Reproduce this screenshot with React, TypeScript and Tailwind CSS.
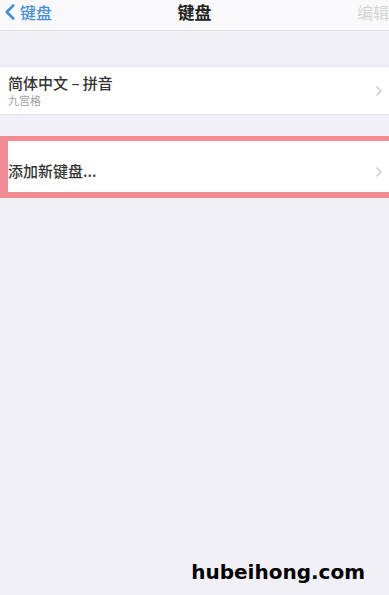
import { ChevronLeft, ChevronRight } from "lucide-react"

const font = { fontFamily: '"Noto Sans CJK SC", "Noto Sans", sans-serif' }

export default function App() {
    return (
        <div className="w-[389px] h-[595px] bg-[#f1f0f6] flex flex-col overflow-hidden" style={font}>
            <div className="h-[31px] bg-[#f9f9fb] border-b border-[#e2e2e6] flex items-start relative pt-[1px]">
                <div className="flex items-center text-[#4a8fd6] h-[22px]">
                    <ChevronLeft className="size-[26px] -ml-[3px]" strokeWidth={2.5} />
                    <span className="text-[16px] font-medium -ml-[3px] leading-[20px]">键盘</span>
                </div>
                <span className="absolute left-1/2 -translate-x-1/2 top-[1px] text-[17px] leading-[22px] font-bold text-[#222]">键盘</span>
                <span className="ml-auto text-[16px] leading-[22px] text-[#d4d4d8]">编辑</span>
            </div>

            <div className="h-[35px]" />

            <div className="h-[49px] bg-white border-y border-[#e6e6ea] flex items-center pl-[8px] pr-[2px]">
                <div className="flex flex-col leading-none">
                    <span className="text-[15px] text-[#333] font-medium">简体中文 – 拼音</span>
                    <span className="text-[11px] text-[#a0a0a6] mt-[5px]">九宫格</span>
                </div>
                <ChevronRight className="ml-auto size-[16px] text-[#c7c7cc]" />
            </div>

            <div className="h-[21px]" />

            <div className="h-[62px] bg-[#f18c95] pt-[5px] pb-[6px] pl-[8px] flex">
                <div className="flex-1 bg-white flex items-center pt-[10px] pr-[2px]">
                    <span className="text-[15px] text-[#333] font-medium">添加新键盘...</span>
                    <ChevronRight className="ml-auto size-[16px] text-[#c7c7cc]" />
                </div>
            </div>

            <div className="flex-1 flex items-end justify-end pr-[24px] pb-[8px]">
                <span className="text-[20px] font-black text-black" style={{ fontFamily: '"DejaVu Sans", sans-serif' }}>hubeihong.com</span>
            </div>
        </div>
    )
}
